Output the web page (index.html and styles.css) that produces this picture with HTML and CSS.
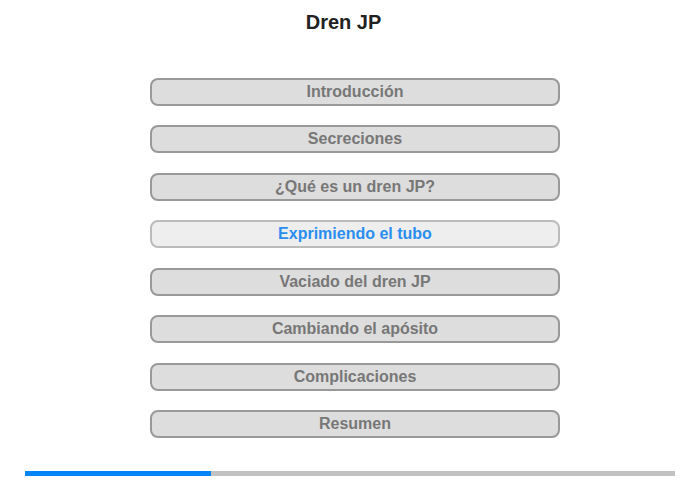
FILE: index.html
```html
<!DOCTYPE html>
<html lang="es">
<head>
<meta charset="utf-8">
<link rel="stylesheet" href="styles.css">
</head>
<body>
<div class="page">
  <h1 class="title">Dren JP</h1>
  <nav class="menu">
    <div class="item">Introducción</div>
    <div class="item">Secreciones</div>
    <div class="item">¿Qué es un dren JP?</div>
    <div class="item active">Exprimiendo el tubo</div>
    <div class="item">Vaciado del dren JP</div>
    <div class="item">Cambiando el apósito</div>
    <div class="item">Complicaciones</div>
    <div class="item">Resumen</div>
  </nav>
  <div class="progress"><div class="fill" style="width:186px"></div></div>
</div>
</body>
</html>
```
FILE: styles.css
```css
html, body { margin: 0; padding: 0; background: #fff; }
body { font-family: "Liberation Sans", Arial, sans-serif; }
.page { width: 700px; height: 480px; display: flex; flex-direction: column; align-items: center; }
.title { margin: 10px 13px 0 0; font-size: 20px; line-height: 24px; font-weight: bold; color: #222; }
.menu { margin: 44px 0 0 10px; display: flex; flex-direction: column; gap: 19.43px; }
.item { box-sizing: border-box; width: 410px; height: 28px; border: 2px solid #999; border-radius: 8px; background: #ddd; color: #777; font-weight: bold; font-size: 16px; line-height: 24px; text-align: center; }
.item.active { background: #eee; border-color: #bbb; color: #2a8ef0; }
.progress { margin-top: 33px; width: 650px; height: 5px; background: #c2c2c2; display: flex; }
.fill { background: #0585f5; height: 100%; }
```
